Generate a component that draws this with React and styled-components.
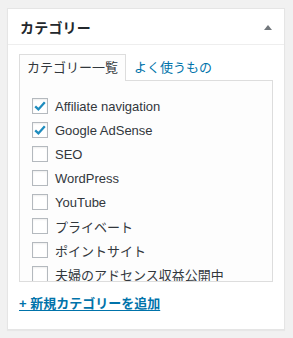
import React from 'react';
import styled, { createGlobalStyle } from 'styled-components';

const GlobalStyle = createGlobalStyle`
    html, body {
        margin: 0;
        padding: 0;
        background: #f1f1f1;
    }

    body {
        font-family: "Liberation Sans", "Noto Sans CJK JP", sans-serif;
        font-size: 13px;
        color: #32373c;
    }
`;

const Page = styled.div`
    padding: 8px 8px 6px 7px;
`;

const Box = styled.div`
    background: #fff;
    border: 1px solid #e5e5e5;
    box-shadow: 0 1px 1px rgba(0, 0, 0, 0.04);
    height: 322px;
    box-sizing: border-box;
`;

const Header = styled.div`
    display: flex;
    align-items: center;
    justify-content: space-between;
    height: 35px;
    padding: 0 12px 0 12px;
    border-bottom: 1px solid #eee;
`;

const Title = styled.h2`
    margin: 0;
    font-size: 14px;
    font-weight: 700;
    color: #23282d;
    letter-spacing: 0.2px;
`;

const Toggle = styled.span`
    width: 0;
    height: 0;
    border-left: 4px solid transparent;
    border-right: 4px solid transparent;
    border-bottom: 5px solid #72777c;
    margin-top: 1px;
`;

const Inside = styled.div`
    padding: 9px 11px 0 11px;
`;

const Tabs = styled.ul`
    display: flex;
    margin: 0;
    padding: 0;
    list-style: none;
`;

const Tab = styled.li`
    box-sizing: border-box;
    height: ${({ $active }) => ($active ? '27px' : '26px')};
    margin-bottom: ${({ $active }) => ($active ? '-1px' : '0')};
    padding: 4px 7px 0 7px;
    border: 1px solid ${({ $active }) => ($active ? '#ddd' : 'transparent')};
    border-bottom: none;
    background: ${({ $active }) => ($active ? '#fdfdfd' : 'transparent')};
    color: ${({ $active }) => ($active ? '#32373c' : '#0073aa')};
    font-size: 13px;
    line-height: 17px;
    position: relative;
    z-index: 1;
`;

const Panel = styled.div`
    height: 200px;
    overflow: hidden;
    border: 1px solid #ddd;
    background: #fdfdfd;
    padding: 0 12px;
`;

const List = styled.ul`
    margin: 13px 0 0 0;
    padding: 0;
    list-style: none;
`;

const Row = styled.li`
    display: flex;
    align-items: center;
    height: 24px;
    gap: 7px;
    white-space: nowrap;
    font-size: 13px;
    color: #32373c;
`;

const CheckBox = styled.span`
    flex: none;
    display: flex;
    align-items: center;
    justify-content: center;
    width: 16px;
    height: 16px;
    box-sizing: border-box;
    border: 1px solid #b4b9be;
    background: #fff;
    box-shadow: inset 0 1px 2px rgba(0, 0, 0, 0.07);
`;

const AddLink = styled.a`
    display: inline-block;
    margin-top: 11px;
    color: #0073aa;
    font-weight: 700;
    font-size: 13px;
    text-decoration: underline;
    text-underline-offset: 2px;
`;

const categories = [
    { name: 'Affiliate navigation', checked: true },
    { name: 'Google AdSense', checked: true },
    { name: 'SEO' },
    { name: 'WordPress' },
    { name: 'YouTube' },
    { name: 'プライベート' },
    { name: 'ポイントサイト' },
    { name: '夫婦のアドセンス収益公開中' },
];

const Check = () => (
    <svg width="14" height="14" viewBox="0 0 14 14">
        <path d="M2.2 7.3 L5.4 10.4 L11.8 3.2" fill="none" stroke="#1e8cbe" strokeWidth="2.3" />
    </svg>
);

const App = () => (
    <Page>
        <GlobalStyle />
        <Box>
            <Header>
                <Title>カテゴリー</Title>
                <Toggle />
            </Header>
            <Inside>
                <Tabs>
                    <Tab $active>カテゴリー一覧</Tab>
                    <Tab>よく使うもの</Tab>
                </Tabs>
                <Panel>
                    <List>
                        {categories.map((c) => (
                            <Row key={c.name}>
                                <CheckBox>{c.checked && <Check />}</CheckBox>
                                {c.name}
                            </Row>
                        ))}
                    </List>
                </Panel>
                <AddLink href="#">+ 新規カテゴリーを追加</AddLink>
            </Inside>
        </Box>
    </Page>
);

export default App;
